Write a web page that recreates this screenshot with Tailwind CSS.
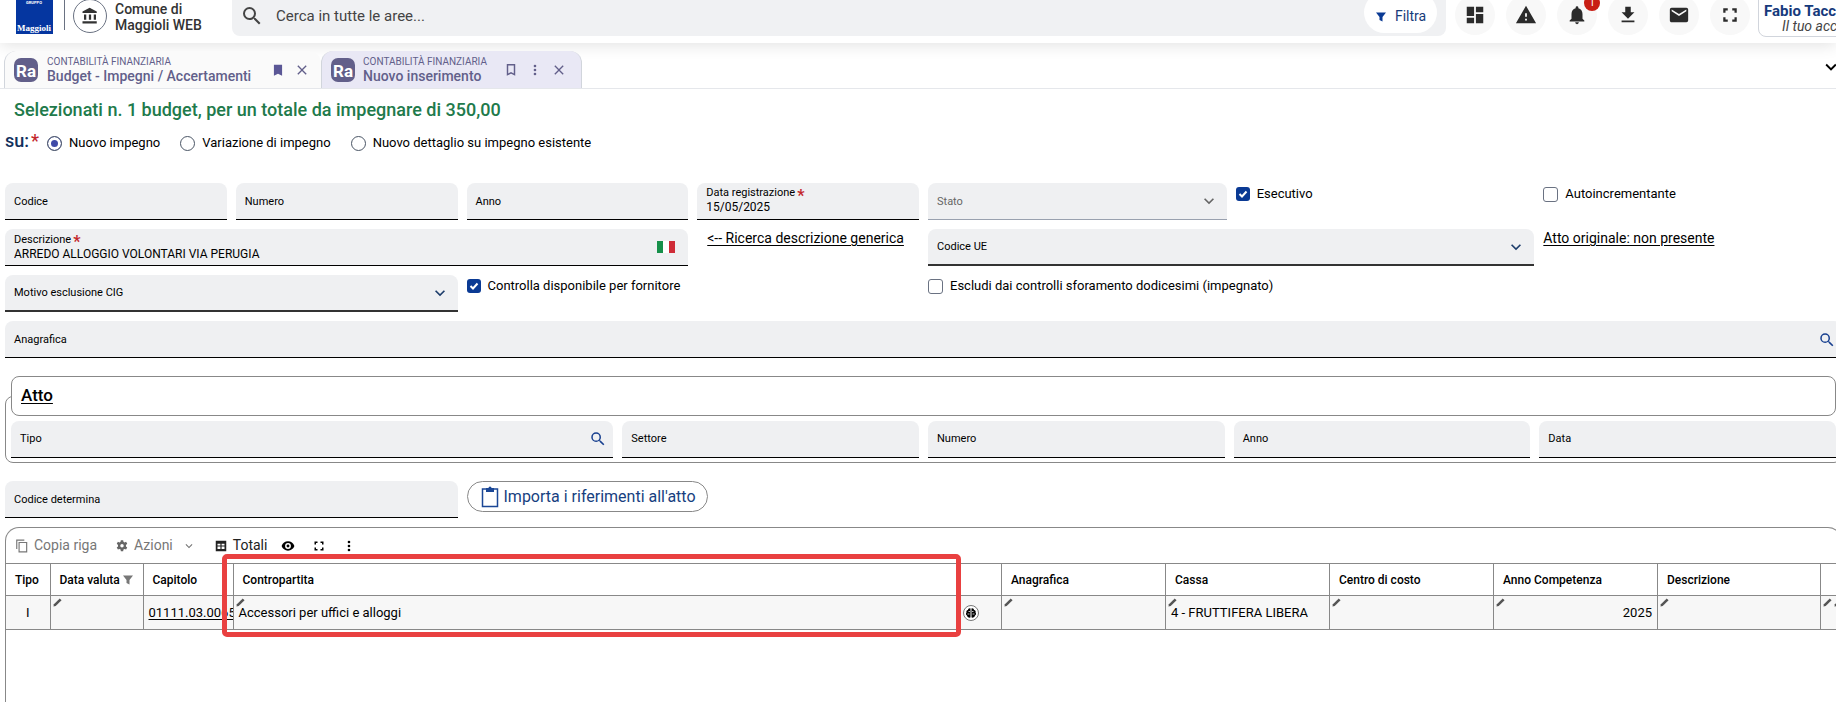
<!DOCTYPE html>
<html lang="it">
<head>
    <meta charset="UTF-8">
    <meta name="viewport" content="width=device-width, initial-scale=1.0">
    <title>Contabilità finanziaria - Nuovo inserimento</title>
    <script src="https://cdn.jsdelivr.net/npm/@tailwindcss/browser@4"></script>
</head>
<body class="h-screen overflow-hidden bg-white font-['Roboto',sans-serif] text-[13px] text-black">

    <!-- Icone riutilizzate nella pagina -->
    <svg class="hidden">
        <symbol id="i-search" viewBox="0 0 24 24"><path d="M15.5 14h-.79l-.28-.27A6.47 6.47 0 0 0 16 9.5 6.5 6.5 0 1 0 9.5 16c1.61 0 3.09-.59 4.23-1.57l.27.28v.79l5 4.99L20.49 19l-4.99-5zm-6 0a4.5 4.5 0 1 1 0-9 4.5 4.5 0 0 1 0 9z"/></symbol>
        <symbol id="i-filter" viewBox="0 0 24 24"><path d="M2 3h20l-7 9v9l-6-3v-6z"/></symbol>
        <symbol id="i-down" viewBox="0 0 24 24"><path d="M7.41 8.59 12 13.17l4.59-4.58L18 10l-6 6-6-6z"/></symbol>
        <symbol id="i-close" viewBox="0 0 24 24"><path d="M19 6.41 17.59 5 12 10.59 6.41 5 5 6.41 10.59 12 5 17.59 6.41 19 12 13.41 17.59 19 19 17.59 13.41 12z"/></symbol>
        <symbol id="i-more" viewBox="0 0 24 24"><path d="M12 8a2 2 0 1 0 0-4 2 2 0 0 0 0 4zm0 2a2 2 0 1 0 0 4 2 2 0 0 0 0-4zm0 6a2 2 0 1 0 0 4 2 2 0 0 0 0-4z"/></symbol>
        <symbol id="i-full" viewBox="0 0 24 24"><path d="M3 3h6v3H6v3H3zM15 3h6v6h-3V6h-3zM3 15h3v3h3v3H3zM18 15h3v6h-6v-3h3z"/></symbol>
        <symbol id="i-pencil" viewBox="0 0 10 10"><path d="M0.500 9.500 1 7 7.500 0.500 9.500 2.500 3 9z"/></symbol>
    </svg>

    <!-- Barra superiore -->
    <header class="flex h-[43px] items-start overflow-hidden bg-white pl-4 shadow-[0_2px_16px_rgba(0,0,0,0.12)]">
        <svg class="h-[34px] w-[37px] shrink-0" viewBox="0 0 37 34">
            <rect width="37" height="34" fill="#0536a0"/>
            <text x="18" y="4" text-anchor="middle" font-size="4" font-weight="700" fill="#fff" font-family="Roboto">GRUPPO</text>
            <text x="18" y="31" text-anchor="middle" font-size="9" font-weight="700" fill="#fff" font-family="Liberation Serif">Maggioli</text>
        </svg>
        <div class="ml-[11px] h-[30px] w-px shrink-0 bg-gray-500"></div>
        <div class="-mt-px ml-2 flex size-[34px] shrink-0 items-center justify-center rounded-full border border-gray-500">
            <svg class="size-[18px] fill-[#333]" viewBox="0 0 24 24"><path d="M4 10v7h3v-7zm6.500 0v7h3v-7zM2 22h19v-3H2zm15-12v7h3v-7zM11.500 1 2 6v2h19V6z"/></svg>
        </div>
        <div class="ml-2 mt-px w-[117px] shrink-0 text-[14px] leading-4 font-medium text-[#333]">
            <span class="block">Comune di</span>
            <span class="block">Maggioli WEB</span>
        </div>
        <div class="flex h-9 flex-1 items-start rounded-b-lg bg-[#f0f1f3] pl-2 pr-[9px]">
            <svg class="mt-1 size-6 fill-[#444]"><use href="#i-search"/></svg>
            <input type="text" aria-label="Cerca" placeholder="Cerca in tutte le aree..." class="ml-3 h-8 flex-1 text-[15px] text-[#444] outline-none placeholder:text-[#444]">
            <button type="button" class="-mt-2 flex h-[41px] w-[73px] items-center justify-center gap-2 rounded-full bg-white pt-2 text-[14px] text-[#173b7a]">
                <svg class="size-3 fill-[#0a3a94]"><use href="#i-filter"/></svg>Filtra
            </button>
        </div>
        <div class="-mt-[5px] ml-[9px] flex shrink-0 gap-[11px] fill-[#2b2b2b]">
            <button type="button" aria-label="Dashboard" class="flex size-10 items-center justify-center rounded-full bg-[#f8f8f8]">
                <svg class="size-[22px]" viewBox="0 0 24 24"><path d="M3 13h8V3H3zm0 8h8v-6H3zm10 0h8V11h-8zm0-18v6h8V3z"/></svg>
            </button>
            <button type="button" aria-label="Avvisi" class="flex size-10 items-center justify-center rounded-full bg-[#f8f8f8]">
                <svg class="size-[22px]" viewBox="0 0 24 24"><path d="M1 21h22L12 2zm12-3h-2v-2h2zm0-4h-2v-4h2z"/></svg>
            </button>
            <button type="button" aria-label="Notifiche" class="relative flex size-10 items-center justify-center rounded-full bg-[#f8f8f8]">
                <svg class="size-[22px]" viewBox="0 0 24 24"><path d="M12 22c1.100 0 2-.9 2-2h-4a2 2 0 0 0 2 2zm6-6v-5c0-3.070-1.640-5.640-4.500-6.320V4a1.500 1.500 0 0 0-3 0v.68C7.630 5.360 6 7.920 6 11v5l-2 2v1h16v-1z"/></svg>
                <span class="absolute -right-[3px] top-0 size-4 rounded-full bg-[#c81e14] text-center text-[10px] leading-4 text-white">1</span>
            </button>
            <button type="button" aria-label="Scarica" class="flex size-10 items-center justify-center rounded-full bg-[#f8f8f8]">
                <svg class="size-[22px]" viewBox="0 0 24 24"><path d="M19 9h-4V3H9v6H5l7 7zM5 18v2h14v-2z"/></svg>
            </button>
            <button type="button" aria-label="Messaggi" class="flex size-10 items-center justify-center rounded-full bg-[#f8f8f8]">
                <svg class="size-[22px]" viewBox="0 0 24 24"><path d="M20 4H4a2 2 0 0 0-2 2v12c0 1.100.9 2 2 2h16a2 2 0 0 0 2-2V6a2 2 0 0 0-2-2zm0 4-8 5-8-5V6l8 5 8-5z"/></svg>
            </button>
            <button type="button" aria-label="Schermo intero" class="flex size-10 items-center justify-center rounded-full bg-[#f8f8f8]">
                <svg class="size-[18px]"><use href="#i-full"/></svg>
            </button>
        </div>
        <button type="button" class="-mr-2 -mt-2 ml-2 h-[45px] w-[86px] shrink-0 overflow-hidden rounded-lg border border-gray-300 pl-[5px] pt-1.5 text-left whitespace-nowrap">
            <span class="block text-[15px] leading-4 font-bold text-[#163a7c]">Fabio Tacc</span>
            <span class="block pl-[18px] text-[14px] leading-[14px] text-[#444] italic">Il tuo acc</span>
        </button>
    </header>

    <!-- Schede aperte -->
    <nav class="flex h-[46px] items-end border-b border-gray-200 pl-1">
        <div class="flex h-[37px] w-[317px] items-center rounded-t-xl border-l border-gray-300 bg-[#fafafa] pl-[9px] text-[#625f8a]">
            <svg class="size-6" viewBox="0 0 24 24"><rect width="24" height="24" rx="7" fill="#625f8a"/><text x="12" y="19" text-anchor="middle" font-size="17" font-weight="700" fill="#fff">Ra</text></svg>
            <a href="#" class="ml-[9px] w-[223px] whitespace-nowrap">
                <span class="block text-[10px] leading-3">CONTABILITÀ FINANZIARIA</span>
                <span class="block text-[14px] leading-4 font-medium">Budget - Impegni / Accertamenti</span>
            </a>
            <button type="button" aria-label="Segnalibro"><svg class="h-3.5 w-4 fill-[#5b5796]" viewBox="0 0 24 24"><path d="M19 3H5v19l7-3.500 7 3.500z"/></svg></button>
            <button type="button" aria-label="Chiudi scheda" class="ml-2"><svg class="size-4 fill-[#625f8a]"><use href="#i-close"/></svg></button>
        </div>
        <div class="flex h-[37px] w-[261px] items-center rounded-t-xl border-x border-gray-300 bg-[#e9e8f5] pl-[9px] text-[#625f8a]">
            <svg class="size-6" viewBox="0 0 24 24"><rect width="24" height="24" rx="7" fill="#625f8a"/><text x="12" y="19" text-anchor="middle" font-size="17" font-weight="700" fill="#fff">Ra</text></svg>
            <a href="#" class="ml-2 w-[140px] whitespace-nowrap">
                <span class="block text-[10px] leading-3">CONTABILITÀ FINANZIARIA</span>
                <span class="block text-[14px] leading-4 font-medium">Nuovo inserimento</span>
            </a>
            <button type="button" aria-label="Segnalibro"><svg class="h-3.5 w-4 fill-none stroke-[#625f8a] stroke-[2.5]" viewBox="0 0 24 24"><path d="M18 3H6v17l6-3 6 3z"/></svg></button>
            <button type="button" aria-label="Altro" class="ml-2"><svg class="size-4 fill-[#625f8a]"><use href="#i-more"/></svg></button>
            <button type="button" aria-label="Chiudi scheda" class="ml-2"><svg class="size-4 fill-[#625f8a]"><use href="#i-close"/></svg></button>
        </div>
        <button type="button" aria-label="Elenco schede" class="-mr-1.5 mb-2.5 ml-auto"><svg class="size-[22px] fill-black"><use href="#i-down"/></svg></button>
    </nav>

    <main class="-mr-1.5 pl-[5px]">
        <h1 class="mt-[9px] pl-[9px] text-[18px] leading-6 font-medium text-[#217a4b]">Selezionati n. 1 budget, per un totale da impegnare di 350,00</h1>

        <div class="mt-1.5 flex h-[30px] items-center">
            <span class="mr-2 pb-1 text-[18px] leading-6 font-medium text-[#12305c]">su:<span class="ml-0.5 text-[#c3272b]">*</span></span>
            <label class="mr-5 flex items-center gap-[7px]"><input type="radio" name="su" checked class="size-[15px] appearance-none rounded-full border border-gray-600 bg-[#3f4aa8] shadow-[inset_0_0_0_3px_#fff]">Nuovo impegno</label>
            <label class="mr-5 flex items-center gap-[7px]"><input type="radio" name="su" class="size-[15px] appearance-none rounded-full border border-gray-600">Variazione di impegno</label>
            <label class="flex items-center gap-[7px]"><input type="radio" name="su" class="size-[15px] appearance-none rounded-full border border-gray-600">Nuovo dettaglio su impegno esistente</label>
        </div>

        <!-- Dati dell'impegno -->
        <form class="mt-[25px] grid grid-cols-24 gap-x-[9px] gap-y-[9px] text-[11px]">
            <div class="col-span-3 flex h-[37px] items-center rounded-t-lg border-b border-black bg-[#eff0f2] px-[9px] pt-0.5">
                <label for="codice">Codice</label><input id="codice" type="text" class="min-w-0 flex-1 outline-none">
            </div>
            <div class="col-span-3 flex h-[37px] items-center rounded-t-lg border-b border-black bg-[#eff0f2] px-[9px] pt-0.5">
                <label for="numero">Numero</label><input id="numero" type="text" class="min-w-0 flex-1 outline-none">
            </div>
            <div class="col-span-3 flex h-[37px] items-center rounded-t-lg border-b border-black bg-[#eff0f2] px-[9px] pt-0.5">
                <label for="anno">Anno</label><input id="anno" type="text" class="min-w-0 flex-1 outline-none">
            </div>
            <div class="col-span-3 h-[37px] rounded-t-lg border-b border-black bg-[#eff0f2] px-[9px] pt-1">
                <label for="data-reg" class="flex h-[13px] items-center">Data registrazione<b class="ml-0.5 pt-1 text-[16px] leading-3 text-[#c3272b]">*</b></label>
                <input id="data-reg" type="text" value="15/05/2025" class="block h-3.5 w-full text-[12px] outline-none">
            </div>
            <div class="relative col-span-4 h-[37px] rounded-t-lg border-b border-gray-400 bg-[#eff0f2] text-[#666]">
                <select aria-label="Stato" disabled class="size-full appearance-none px-[9px] pt-0.5 opacity-100"><option>Stato</option></select>
                <svg class="pointer-events-none absolute right-2 top-2 size-5 fill-[#666]"><use href="#i-down"/></svg>
            </div>
            <label class="col-span-4 flex h-[22px] items-center gap-[7px] text-[13px]">
                <span class="relative size-3.5"><input type="checkbox" checked class="block size-3.5 appearance-none rounded-[3px] bg-[#0a3a94]"><svg class="pointer-events-none absolute inset-0 fill-none stroke-white stroke-2" viewBox="0 0 14 14"><path d="m3.500 7 2.500 2.500 4.500-5"/></svg></span>
                Esecutivo
            </label>
            <label class="col-span-4 flex h-[22px] items-center gap-[7px] text-[13px]">
                <input type="checkbox" class="size-[15px] appearance-none rounded-[3px] border border-gray-500 bg-white">Autoincrementante
            </label>

            <div class="col-span-9 flex h-[37px] items-center rounded-t-lg border-b border-black bg-[#eff0f2] px-[9px]">
                <div class="flex-1">
                    <label for="descrizione" class="flex h-[13px] items-center">Descrizione<b class="ml-0.5 pt-1 text-[16px] leading-3 text-[#c3272b]">*</b></label>
                    <input id="descrizione" type="text" value="ARREDO ALLOGGIO VOLONTARI VIA PERUGIA" class="block h-3.5 w-full text-[12px] outline-none">
                </div>
                <svg class="mr-1 h-3 w-[18px]" viewBox="0 0 18 12"><path fill="#16904a" d="M0 0h6v12H0z"/><path fill="#fff" d="M6 0h6v12H6z"/><path fill="#cf2b37" d="M12 0h6v12h-6z"/></svg>
            </div>
            <div class="col-span-3 pl-2.5"><a href="#" class="text-[14px] leading-[18px] whitespace-nowrap underline underline-offset-2">&lt;-- Ricerca descrizione generica</a></div>
            <div class="relative col-span-8 h-[37px] rounded-t-lg border-b-2 border-[#333] bg-[#eff0f2]">
                <select aria-label="Codice UE" class="size-full appearance-none px-[9px] pt-0.5"><option>Codice UE</option></select>
                <svg class="pointer-events-none absolute right-2 top-2 size-5 fill-[#1d3d6b]"><use href="#i-down"/></svg>
            </div>
            <div class="col-span-4"><a href="#" class="text-[14px] leading-[18px] whitespace-nowrap underline underline-offset-2">Atto originale: non presente</a></div>

            <div class="relative col-span-6 h-[37px] rounded-t-lg border-b-2 border-[#333] bg-[#eff0f2]">
                <select aria-label="Motivo esclusione CIG" class="size-full appearance-none px-[9px] pt-0.5"><option>Motivo esclusione CIG</option></select>
                <svg class="pointer-events-none absolute right-2 top-2 size-5 fill-[#1d3d6b]"><use href="#i-down"/></svg>
            </div>
            <label class="col-span-6 flex h-[22px] items-center gap-[7px] text-[13px]">
                <span class="relative size-3.5"><input type="checkbox" checked class="block size-3.5 appearance-none rounded-[3px] bg-[#0a3a94]"><svg class="pointer-events-none absolute inset-0 fill-none stroke-white stroke-2" viewBox="0 0 14 14"><path d="m3.500 7 2.500 2.500 4.500-5"/></svg></span>
                Controlla disponibile per fornitore
            </label>
            <label class="col-span-12 flex h-[22px] items-center gap-[7px] text-[13px]">
                <input type="checkbox" class="size-[15px] appearance-none rounded-[3px] border border-gray-500 bg-white">Escludi dai controlli sforamento dodicesimi (impegnato)
            </label>

            <div class="col-span-24 flex h-[37px] items-center rounded-t-lg border-b border-black bg-[#eff0f2] pl-[9px] pr-1.5 pt-0.5">
                <label for="anagrafica">Anagrafica</label><input id="anagrafica" type="text" class="min-w-0 flex-1 outline-none">
                <button type="button" aria-label="Cerca anagrafica"><svg class="size-[18px] fill-[#173f8f]"><use href="#i-search"/></svg></button>
            </div>
        </form>

        <!-- Riferimenti dell'atto -->
        <fieldset class="mt-[18px] rounded-lg border border-[#888] px-[5px] pb-1 text-[11px]">
            <legend class="flex h-10 w-full items-center rounded-lg border border-[#888] bg-white pl-[9px] text-[17px] font-medium underline underline-offset-2">Atto</legend>
            <div class="mt-[5px] grid grid-cols-6 gap-[9px]">
                <div class="col-span-2 flex h-[37px] items-center rounded-t-lg border-b border-black bg-[#eff0f2] pl-[9px] pr-1.5">
                    <label for="atto-tipo">Tipo</label><input id="atto-tipo" type="text" class="min-w-0 flex-1 outline-none">
                    <button type="button" aria-label="Cerca tipo"><svg class="size-[18px] fill-[#173f8f]"><use href="#i-search"/></svg></button>
                </div>
                <div class="flex h-[37px] items-center rounded-t-lg border-b border-black bg-[#eff0f2] px-[9px]">
                    <label for="atto-settore">Settore</label><input id="atto-settore" type="text" class="min-w-0 flex-1 outline-none">
                </div>
                <div class="flex h-[37px] items-center rounded-t-lg border-b border-black bg-[#eff0f2] px-[9px]">
                    <label for="atto-numero">Numero</label><input id="atto-numero" type="text" class="min-w-0 flex-1 outline-none">
                </div>
                <div class="flex h-[37px] items-center rounded-t-lg border-b border-black bg-[#eff0f2] px-[9px]">
                    <label for="atto-anno">Anno</label><input id="atto-anno" type="text" class="min-w-0 flex-1 outline-none">
                </div>
                <div class="flex h-[37px] items-center rounded-t-lg border-b border-black bg-[#eff0f2] px-[9px]">
                    <label for="atto-data">Data</label><input id="atto-data" type="text" class="min-w-0 flex-1 outline-none">
                </div>
            </div>
        </fieldset>

        <div class="mt-[18px] grid grid-cols-24 items-start gap-[9px] text-[11px]">
            <div class="col-span-6 flex h-[37px] items-center rounded-t-lg border-b border-black bg-[#eff0f2] px-[9px] pt-0.5">
                <label for="determina">Codice determina</label><input id="determina" type="text" class="min-w-0 flex-1 outline-none">
            </div>
            <button type="button" class="col-span-4 flex h-[31px] w-[241px] items-center gap-1 rounded-full border border-[#888] pl-3 text-[16px] whitespace-nowrap text-[#173f7f]">
                <svg class="h-[22px] w-5" viewBox="0 0 20 22"><path d="M2.500 3h15v17.500h-15z" fill="none" stroke="#1b4796" stroke-width="1.500"/><path d="M6 2h2.500a1.500 1.500 0 0 1 3 0H14v4H6z" fill="#1b4796"/></svg>
                Importa i riferimenti all'atto
            </button>
        </div>

        <!-- Griglia delle righe -->
        <section class="relative mt-[9px] h-48 overflow-hidden rounded-t-[14px] border border-[#888] border-b-0">
            <div class="flex h-[35px] items-center text-[14px] text-[#777]">
                <button type="button" class="ml-[9px] flex items-center gap-[5px]"><svg class="size-3.5 fill-[#777]" viewBox="0 0 24 24"><path d="M16 1H2v16h2V3h12zm5 4H6v18h15zm-2 16H8V7h11z"/></svg>Copia riga</button>
                <button type="button" class="ml-[18px] flex items-center gap-[5px]"><svg class="size-3.5 fill-[#666]" viewBox="0 0 24 24"><path fill-rule="evenodd" d="m10 2-.5 2.800-1.800 1-2.700-1-2 3.500 2.200 1.800v2.800L3 14.700l2 3.500 2.700-1 1.800 1L10 21h4l.5-2.800 1.800-1 2.700 1 2-3.500-2.200-1.800v-2.800L21 8.300l-2-3.500-2.700 1-1.800-1L14 2zm2 6.500a3 3 0 1 1 0 6 3 3 0 0 1 0-6z"/></svg>Azioni<svg class="ml-1 size-3.5 fill-[#777]"><use href="#i-down"/></svg></button>
                <button type="button" class="ml-[18px] flex items-center gap-[5px] text-[#222]"><svg class="size-3.5 fill-[#222]" viewBox="0 0 24 24"><path fill-rule="evenodd" d="M3 3h18v18H3zm3 5v3h5V8zm7 0v3h5V8zm-7 5v4h5v-4zm7 0v4h5v-4z"/></svg>Totali</button>
                <button type="button" aria-label="Visualizza" class="ml-3.5"><svg class="size-3.5 fill-black" viewBox="0 0 24 24"><path fill-rule="evenodd" d="M12 4C7 4 2.700 7.300 1 12c1.700 4.700 6 8 11 8s9.300-3.300 11-8c-1.700-4.700-6-8-11-8zm0 3a5 5 0 1 1 0 10 5 5 0 0 1 0-10zm0 2.500a2.500 2.500 0 1 0 0 5 2.500 2.500 0 0 0 0-5z"/></svg></button>
                <button type="button" aria-label="Espandi" class="ml-[18px]"><svg class="size-3 fill-black"><use href="#i-full"/></svg></button>
                <button type="button" aria-label="Altro" class="ml-4"><svg class="size-4 fill-black"><use href="#i-more"/></svg></button>
            </div>
            <table class="w-full table-fixed border-collapse border-y border-[#888] text-left">
                <colgroup>
                    <col class="w-[44px]"><col class="w-[93px]"><col class="w-[90px]"><col><col class="w-[44px]">
                    <col class="w-[164px]"><col class="w-[164px]"><col class="w-[164px]"><col class="w-[164px]"><col class="w-[163px]"><col class="w-[20px]">
                </colgroup>
                <thead>
                    <tr class="h-8 text-[12px] whitespace-nowrap [&>th]:border-r [&>th]:border-[#888] [&>th]:p-0 [&>th]:pl-[9px] [&>th]:font-medium">
                        <th>Tipo</th>
                        <th>Data valuta<svg class="ml-0.5 inline size-3 fill-[#777]"><use href="#i-filter"/></svg></th>
                        <th>Capitolo</th>
                        <th>Contropartita</th>
                        <th></th>
                        <th>Anagrafica</th>
                        <th>Cassa</th>
                        <th>Centro di costo</th>
                        <th>Anno Competenza</th>
                        <th>Descrizione</th>
                        <th></th>
                    </tr>
                </thead>
                <tbody>
                    <tr class="h-[34px] border-t border-[#888] bg-[#f7f7f7] whitespace-nowrap [&>td]:relative [&>td]:border-r [&>td]:border-[#888] [&>td]:px-[5px] [&>td]:py-0">
                        <td class="text-center">I</td>
                        <td><svg class="absolute left-0.5 top-0.5 size-[9px] fill-[#555]"><use href="#i-pencil"/></svg></td>
                        <td class="overflow-hidden"><a href="#" class="underline underline-offset-2">01111.03.0065</a></td>
                        <td><svg class="absolute left-0.5 top-0.5 size-[9px] fill-[#555]"><use href="#i-pencil"/></svg>Accessori per uffici e alloggi</td>
                        <td>
                            <button type="button" aria-label="Suggerimenti" class="flex size-4 items-center justify-center rounded-full border border-[#777] bg-white"><svg class="size-3 shrink-0" viewBox="0 0 24 24"><path d="M11 3C8 2 6 4 6 6c-3 0-4 3-3 5-2 2-1 5 1 6 0 3 4 5 7 4zM13 3c3-1 5 1 5 3 3 0 4 3 3 5 2 2 1 5-1 6 0 3-4 5-7 4z"/><path d="M7 9h3M5 14h4M17 9h-3M19 14h-4" fill="none" stroke="#fff" stroke-width="1.500"/></svg></button>
                        </td>
                        <td><svg class="absolute left-0.5 top-0.5 size-[9px] fill-[#555]"><use href="#i-pencil"/></svg></td>
                        <td><svg class="absolute left-0.5 top-0.5 size-[9px] fill-[#555]"><use href="#i-pencil"/></svg>4 - FRUTTIFERA LIBERA</td>
                        <td><svg class="absolute left-0.5 top-0.5 size-[9px] fill-[#555]"><use href="#i-pencil"/></svg></td>
                        <td class="text-right"><svg class="absolute left-0.5 top-0.5 size-[9px] fill-[#555]"><use href="#i-pencil"/></svg>2025</td>
                        <td><svg class="absolute left-0.5 top-0.5 size-[9px] fill-[#555]"><use href="#i-pencil"/></svg></td>
                        <td><svg class="absolute left-0.5 top-0.5 size-[9px] fill-[#555]"><use href="#i-pencil"/></svg><svg class="absolute left-[13px] top-0.5 size-[9px] fill-[#555]"><use href="#i-pencil"/></svg></td>
                    </tr>
                </tbody>
            </table>
            <!-- Riquadro di evidenza sulla contropartita -->
            <div class="pointer-events-none absolute left-[216px] right-[880px] top-[26px] h-[83px] rounded-[5px] border-[5px] border-[#e94040]"></div>
        </section>
    </main>

</body>
</html>
